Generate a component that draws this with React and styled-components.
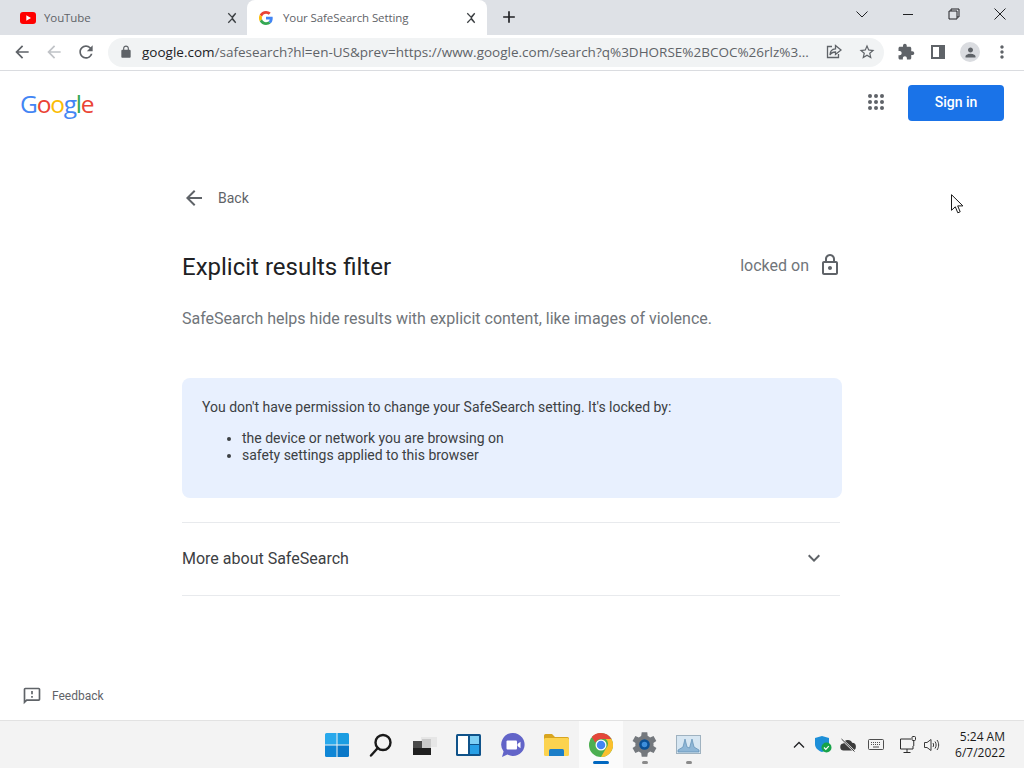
import React from 'react';
import styled, { createGlobalStyle } from 'styled-components';

const GlobalStyle = createGlobalStyle`
  html, body {
    margin: 0;
    padding: 0;
    height: 100%;
    overflow: hidden;
    background: #fff;
    font-family: 'Roboto', 'Liberation Sans', sans-serif;
  }
  #root {
    height: 100%;
  }
`;

const Window = styled.div`
  position: relative;
  display: flex;
  flex-direction: column;
  width: 1024px;
  height: 768px;
  overflow: hidden;
`;

/* ---- browser chrome ---- */

const TabStrip = styled.div`
  display: flex;
  align-items: stretch;
  height: 35px;
  flex: none;
  background: #dee1e6;
  font-family: 'Open Sans', 'Liberation Sans', sans-serif;
`;

const Tab = styled.div`
  display: flex;
  align-items: center;
  box-sizing: border-box;
  width: ${p => (p.$active ? '240px' : '247px')};
  padding: ${p => (p.$active ? '0 8px 0 12px' : '0 7px 0 20px')};
  background: ${p => (p.$active ? '#fff' : 'transparent')};
  border-radius: 8px 8px 0 0;
`;

const TabIcon = styled.span`
  display: flex;
  flex: none;
  margin-right: ${p => p.$gap}px;
`;

const TabTitle = styled.span`
  flex: 1;
  font-size: 11.5px;
  letter-spacing: -0.1px;
  color: #5f6368;
  white-space: nowrap;
`;

const NewTab = styled.div`
  display: flex;
  align-items: center;
  margin: 0 0 2px 12px;
  flex: 1;
`;

const WindowControls = styled.div`
  display: flex;
  align-items: center;
  height: 28px;
  margin-left: auto;
  gap: 34px;
  padding-right: 18px;
`;

const Toolbar = styled.div`
  display: flex;
  align-items: center;
  box-sizing: border-box;
  height: 36px;
  flex: none;
  padding: 0 6px 1px 12px;
  background: #fff;
  border-bottom: 1px solid #dadce0;
`;

const NavButtons = styled.div`
  display: flex;
  align-items: center;
  gap: 12px;
`;

const Omnibox = styled.div`
  display: flex;
  align-items: center;
  box-sizing: border-box;
  width: 776px;
  height: 29px;
  margin-left: 12px;
  padding: 0 8px 0 11px;
  border-radius: 15px;
  background: #f1f3f4;
`;

const Url = styled.div`
  flex: 1;
  margin-left: 9px;
  font-family: 'Open Sans', 'Liberation Sans', sans-serif;
  font-size: 13.5px;
  color: #5f6368;
  white-space: nowrap;
`;

const UrlHost = styled.span`
  color: #202124;
`;

const OmniActions = styled.div`
  display: flex;
  align-items: center;
  gap: 16px;
  margin-left: 8px;
`;

const ToolActions = styled.div`
  display: grid;
  grid-template-columns: repeat(4, 32px);
  justify-items: center;
  align-items: center;
  margin-left: 6px;
`;

const Avatar = styled.div`
  display: flex;
  align-items: center;
  justify-content: center;
  width: 20px;
  height: 20px;
  border-radius: 50%;
  background: #dadce0;
`;

/* ---- page ---- */

const Page = styled.main`
  flex: 1;
  display: flex;
  flex-direction: column;
  min-height: 0;
  background: #fff;
`;

const Header = styled.header`
  display: flex;
  align-items: center;
  height: 62px;
  padding: 0 20px;
`;

const Logo = styled.div`
  font-family: 'Open Sans', 'Liberation Sans', sans-serif;
  font-size: 24.5px;
  letter-spacing: -1.2px;
  line-height: 30px;
  margin-top: 4px;
`;

const LogoLetter = styled.span`
  color: ${p => p.$color};
`;

const AppsGrid = styled.div`
  display: grid;
  grid-template-columns: repeat(3, 4px);
  grid-auto-rows: 4px;
  gap: 2px;
  margin-left: auto;
  margin-right: 24px;
`;

const AppsDot = styled.span`
  border-radius: 50%;
  background: #5f6368;
`;

const SignIn = styled.button`
  width: 96px;
  height: 36px;
  margin-top: 2px;
  padding: 0 0 2px;
  border: none;
  border-radius: 4px;
  background: #1a73e8;
  color: #fff;
  font-family: 'Roboto', sans-serif;
  font-size: 14px;
  font-weight: 500;
`;

const Content = styled.section`
  display: flex;
  flex-direction: column;
  width: 658px;
  margin: 0 0 0 182px;
`;

const BackLink = styled.div`
  display: flex;
  align-items: center;
  height: 24px;
  margin-top: 53px;
  gap: 12px;
  font-size: 14px;
  color: #5f6368;
`;

const TitleRow = styled.div`
  display: flex;
  align-items: center;
  justify-content: space-between;
  width: 660px;
  margin-top: 37px;
  height: 40px;
`;

const Title = styled.h1`
  margin: 0;
  font-size: 24px;
  font-weight: 400;
  color: #202124;
`;

const LockStatus = styled.div`
  display: flex;
  align-items: center;
  gap: 9px;
  margin-bottom: 4px;
  font-size: 16px;
  color: #70757a;
`;

const Description = styled.p`
  margin: 21px 0 0;
  font-size: 16px;
  line-height: 22px;
  color: #70757a;
`;

const Notice = styled.div`
  box-sizing: border-box;
  width: 660px;
  height: 120px;
  margin-top: 48px;
  padding: 20px;
  border-radius: 8px;
  background: #e8f0fe;
  font-size: 14px;
  color: #3c4043;
`;

const NoticeText = styled.div`
  line-height: 18px;
`;

const NoticeList = styled.ul`
  margin: 14px 0 0;
  padding-left: 40px;
  line-height: 17px;
`;

const Disclosure = styled.div`
  display: flex;
  align-items: center;
  justify-content: space-between;
  box-sizing: border-box;
  height: 74px;
  margin-top: 24px;
  padding: 0 14px 2px 0;
  border-top: 1px solid #e8eaed;
  border-bottom: 1px solid #e8eaed;
  font-size: 16px;
  color: #3c4043;
`;

const Feedback = styled.div`
  display: flex;
  align-items: center;
  gap: 10px;
  margin-top: auto;
  margin-bottom: 14px;
  padding-left: 22px;
  font-size: 12px;
  color: #5f6368;
`;

/* ---- taskbar ---- */

const Taskbar = styled.footer`
  display: grid;
  grid-template-columns: 1fr 396px 1fr;
  align-items: center;
  box-sizing: border-box;
  height: 48px;
  flex: none;
  padding-left: 1px;
  background: #f3f3f3;
  border-top: 1px solid #e2e2e2;
`;

const TaskIcons = styled.div`
  grid-column: 2;
  display: grid;
  grid-template-columns: repeat(9, 44px);
  height: 100%;
`;

const TaskIcon = styled.div`
  position: relative;
  display: flex;
  align-items: center;
  justify-content: center;
  background: ${p => (p.$active ? '#fbfbfb' : 'transparent')};
`;

const RunMark = styled.span`
  position: absolute;
  bottom: 4px;
  left: 50%;
  width: ${p => (p.$active ? 16 : 6)}px;
  height: 3px;
  margin-left: ${p => (p.$active ? -8 : -3)}px;
  border-radius: 2px;
  background: ${p => (p.$active ? '#0067c0' : '#8a8a8a')};
`;

const Tray = styled.div`
  display: flex;
  align-items: center;
  justify-content: flex-end;
  padding-right: 19px;
`;

const TrayIcon = styled.span`
  display: flex;
  margin-right: ${p => p.$gap || 0}px;
`;

const Clock = styled.div`
  margin-left: 14px;
  text-align: right;
  font-family: 'Open Sans', 'Liberation Sans', sans-serif;
  font-size: 12px;
  line-height: 16px;
  color: #1a1a1a;
`;

const Cursor = styled.svg`
  position: absolute;
  left: 951px;
  top: 194px;
`;

/* ---- icons ---- */

const GLYPHS = {
  back: 'M20 11H7.83l5.59-5.59L12 4l-8 8 8 8 1.41-1.41L7.83 13H20v-2z',
  reload: 'M17.65 6.35A7.958 7.958 0 0012 4c-4.42 0-7.99 3.58-7.99 8s3.57 8 7.99 8c3.73 0 6.84-2.55 7.73-6h-2.08A5.99 5.99 0 0112 18c-3.31 0-6-2.69-6-6s2.69-6 6-6c1.66 0 3.14.69 4.22 1.78L13 11h7V4l-2.35 2.35z',
  lock: 'M18 8h-1V6c0-2.76-2.24-5-5-5S7 3.24 7 6v2H6c-1.1 0-2 .9-2 2v10c0 1.1.9 2 2 2h12c1.1 0 2-.9 2-2V10c0-1.1-.9-2-2-2zM9 6c0-1.66 1.34-3 3-3s3 1.34 3 3v2H9V6z',
  lockOutline: 'M18 8h-1V6c0-2.76-2.24-5-5-5S7 3.24 7 6v2H6c-1.1 0-2 .9-2 2v10c0 1.1.9 2 2 2h12c1.1 0 2-.9 2-2V10c0-1.1-.9-2-2-2zM9 6c0-1.66 1.34-3 3-3s3 1.34 3 3v2H9V6zm9 14H6V10h12v10zm-6-3c1.1 0 2-.9 2-2s-.9-2-2-2-2 .9-2 2 .9 2 2 2z',
  star: 'M22 9.24l-7.19-.62L12 2 9.19 8.63 2 9.24l5.46 4.73L5.82 21 12 17.27 18.18 21l-1.63-7.03L22 9.24zM12 15.4l-3.76 2.27 1-4.28-3.32-2.88 4.38-.38L12 6.1l1.71 4.03 4.38.38-3.32 2.88 1 4.28L12 15.4z',
  extension: 'M20.5 11H19V7c0-1.1-.9-2-2-2h-4V3.5C13 2.12 11.88 1 10.5 1S8 2.12 8 3.5V5H4c-1.1 0-1.99.9-1.99 2v3.8H3.5c1.49 0 2.7 1.21 2.7 2.7s-1.21 2.7-2.7 2.7H2V20c0 1.1.9 2 2 2h3.8v-1.5c0-1.49 1.21-2.7 2.7-2.7 1.49 0 2.7 1.21 2.7 2.7V22H17c1.1 0 2-.9 2-2v-4h1.5c1.38 0 2.5-1.12 2.5-2.5S21.88 11 20.5 11z',
  person: 'M12 12c2.21 0 4-1.79 4-4s-1.79-4-4-4-4 1.79-4 4 1.79 4 4 4zm0 2c-2.67 0-8 1.34-8 4v2h16v-2c0-2.66-5.33-4-8-4z',
  dots: 'M12 8c1.1 0 2-.9 2-2s-.9-2-2-2-2 .9-2 2 .9 2 2 2zm0 2c-1.1 0-2 .9-2 2s.9 2 2 2 2-.9 2-2-.9-2-2-2zm0 6c-1.1 0-2 .9-2 2s.9 2 2 2 2-.9 2-2-.9-2-2-2z',
  feedback: 'M20 2H4c-1.1 0-1.99.9-1.99 2L2 22l4-4h14c1.1 0 2-.9 2-2V4c0-1.1-.9-2-2-2zm0 14H5.17L4 17.17V4h16v12zM11 12h2v2h-2zm0-6h2v4h-2z',
  chevron: 'M16.59 8.59L12 13.17 7.41 8.59 6 10l6 6 6-6z',
  close: 'M18.3 5.71L16.89 4.3 12 9.19 7.11 4.3 5.7 5.71 10.59 10.6 12 12l-6.3 6.29 1.41 1.41L12 14.81l4.89 4.89 1.41-1.41L13.41 12z',
  plus: 'M19 13h-6v6h-2v-6H5v-2h6V5h2v6h6v2z',
};

const Icon = ({ name, size = 24, color = '#5f6368' }) => (
  <svg width={size} height={size} viewBox="0 0 24 24" fill={color}>
    <path d={GLYPHS[name]} />
  </svg>
);

const GoogleG = () => (
  <svg width="14" height="14" viewBox="0 0 48 48">
    <path fill="#EA4335" d="M24 9.5c3.54 0 6.71 1.22 9.21 3.6l6.85-6.85C35.9 2.38 30.47 0 24 0 14.62 0 6.51 5.38 2.56 13.22l7.98 6.19C12.43 13.72 17.74 9.5 24 9.5z" />
    <path fill="#4285F4" d="M46.98 24.55c0-1.57-.15-3.09-.38-4.55H24v9.02h12.94c-.58 2.96-2.26 5.48-4.78 7.18l7.73 6c4.51-4.18 7.09-10.36 7.09-17.65z" />
    <path fill="#FBBC05" d="M10.53 28.59c-.48-1.45-.76-2.99-.76-4.59s.27-3.14.76-4.59l-7.98-6.19C.92 16.46 0 20.12 0 24c0 3.88.92 7.54 2.56 10.78l7.97-6.19z" />
    <path fill="#34A853" d="M24 48c6.48 0 11.93-2.13 15.89-5.81l-7.73-6c-2.15 1.45-4.92 2.3-8.16 2.3-6.26 0-11.57-4.22-13.47-9.91l-7.98 6.19C6.51 42.62 14.62 48 24 48z" />
  </svg>
);

const YouTubeIcon = () => (
  <svg width="16" height="12" viewBox="0 0 16 12">
    <rect width="16" height="12" rx="3" fill="#f00" />
    <path d="M6.3 3.2v5.6L11 6z" fill="#fff" />
  </svg>
);

const ShareIcon = () => (
  <svg width="16" height="16" viewBox="0 0 16 16" fill="none" stroke="#5f6368" strokeWidth="1.3">
    <path d="M6 2.5H1.5v11h11V10" />
    <path d="M9.5 1.500 15 6l-5.500 4.500V8C7 8 5 9 4 11c0-3.500 2-6 5.500-6.200z" />
  </svg>
);

const SidePanelIcon = () => (
  <svg width="14" height="14" viewBox="0 0 14 14">
    <path d="M0 0h14v14H0z" fill="#5f6368" />
    <path d="M2 2h6v10H2z" fill="#fff" />
  </svg>
);

const WinLine = ({ d, width = 1 }) => (
  <svg width="12" height="12" viewBox="0 0 12 12" fill="none" stroke="#202124" strokeWidth={width}>
    <path d={d} />
  </svg>
);

const WindowsLogo = () => (
  <svg width="24" height="24" viewBox="0 0 24 24">
    <path d="M0 1.500A1.500 1.500 0 0 1 1.500 0H11.500V11.500H0z" fill="#29a9ec" />
    <path d="M12.500 0H22.500A1.500 1.500 0 0 1 24 1.500V11.500H12.500z" fill="#1b9de2" />
    <path d="M0 12.500H11.500V24H1.500A1.500 1.500 0 0 1 0 22.500z" fill="#0f86d6" />
    <path d="M12.500 12.500H24V22.500A1.500 1.500 0 0 1 22.500 24H12.500z" fill="#0a78c8" />
  </svg>
);

const SearchIcon = () => (
  <svg width="24" height="24" viewBox="0 0 24 24" fill="none" stroke="#1a1a1a" strokeWidth="2.4">
    <circle cx="14" cy="9.500" r="7.500" />
    <path d="M8.800 15 2 22.500" strokeLinecap="round" />
  </svg>
);

const TaskViewIcon = () => (
  <svg width="24" height="20" viewBox="0 0 24 20">
    <path d="M8 2h16v10H8z" fill="#e6e6e6" />
    <path d="M0 6h18v14H0z" fill="#1f1f1f" />
    <path d="M0 6h18v7H0z" fill="#4a4a4a" />
    <path d="M9 4h9v9H9z" fill="#c9c9c9" />
  </svg>
);

const WidgetsIcon = () => (
  <svg width="25" height="22" viewBox="0 0 25 22">
    <rect width="25" height="22" rx="1.500" fill="#10538a" />
    <path d="M2 2h10v18H2z" fill="#fff" />
    <path d="M14 2h9v8H14z" fill="#7fd0f5" />
    <path d="M14 11h9v9H14z" fill="#28a0e6" />
  </svg>
);

const ChatIcon = () => (
  <svg width="24" height="24" viewBox="0 0 24 24">
    <path d="M12 0a11.500 11.500 0 1 1-5.600 21.500L1 24l1.600-5.600A11.500 11.500 0 0 1 12 0z" fill="#6264c8" />
    <path d="M6.500 7.500h8.500a1 1 0 0 1 1 1v7a1 1 0 0 1-1 1H6.500a1 1 0 0 1-1-1v-7a1 1 0 0 1 1-1z" fill="#fff" />
    <path d="m16.500 11 3-2.200v6.400l-3-2.200z" fill="#fff" />
  </svg>
);

const ExplorerIcon = () => (
  <svg width="25" height="22" viewBox="0 0 25 22">
    <path d="M0 1.500A1.500 1.500 0 0 1 1.500 0H8l3 3h12.500A1.500 1.500 0 0 1 25 4.500V8H0z" fill="#d8a520" />
    <rect y="4" width="25" height="18" rx="1.500" fill="#fcd34f" />
    <path d="M5 16.500A1.500 1.500 0 0 1 6.500 15h12a1.500 1.500 0 0 1 1.500 1.500V22H5z" fill="#1b7ec8" />
  </svg>
);

const ChromeIcon = () => (
  <svg width="24" height="24" viewBox="0 0 48 48">
    <circle cx="24" cy="24" r="24" fill="#4caf50" />
    <path d="M24 0a24 24 0 0 1 20.800 12H24a12 12 0 0 0-11.100 7.500L5.500 8.200A24 24 0 0 1 24 0z" fill="#e4473a" />
    <path d="M44.800 12A24 24 0 0 1 24 48l10.400-18A12 12 0 0 0 33.500 12z" fill="#fbc02d" />
    <circle cx="24" cy="24" r="11" fill="#fff" />
    <circle cx="24" cy="24" r="8.500" fill="#4285f4" />
  </svg>
);

const SettingsIcon = () => (
  <svg width="25" height="25" viewBox="3 3 18 18">
    <path d="M19.400 13c.1-.3.1-.7.1-1s0-.7-.1-1l2.100-1.600-2-3.500-2.500 1a7.500 7.500 0 0 0-1.700-1L15 3.200h-4l-.4 2.700c-.6.300-1.200.6-1.700 1l-2.500-1-2 3.500L6.500 11c0 .3-.1.700-.1 1s0 .7.100 1l-2.100 1.600 2 3.500 2.500-1c.5.400 1.100.7 1.700 1l.4 2.700h4l.4-2.700c.6-.3 1.200-.6 1.700-1l2.500 1 2-3.500z" transform="translate(-1 0)" fill="#74787d" />
    <circle cx="12" cy="12" r="3.800" fill="#0b4f94" />
    <circle cx="12" cy="12" r="2" fill="#3f8fdc" />
  </svg>
);

const MonitorIcon = () => (
  <svg width="25" height="19" viewBox="0 0 25 19">
    <rect x=".5" y=".5" width="24" height="18" fill="#d6e6f2" stroke="#9fb2c0" />
    <path d="M2 15 7 12 9 4l2 8 2.500 1L16 4l2 8 5 3v2H2z" fill="#8eb6d6" stroke="#5f8eb3" strokeWidth=".7" />
  </svg>
);

const ShieldIcon = () => (
  <svg width="17" height="17" viewBox="0 0 17 17">
    <path d="M7 0 14 2v6c0 4-3 6.500-7 8-4-1.500-7-4-7-8V2z" fill="#1d8fd8" />
    <circle cx="11.500" cy="11.500" r="5" fill="#18a34a" />
    <path d="m9 11.500 1.800 1.800 3-3.200" fill="none" stroke="#fff" strokeWidth="1.200" />
  </svg>
);

const CloudOffIcon = () => (
  <svg width="16" height="14" viewBox="0 0 16 14">
    <path d="M4 12.500a3.500 3.500 0 0 1-.5-7 4.500 4.500 0 0 1 8.600-.7A3.800 3.800 0 0 1 12 12.500z" fill="#3b3b3b" />
    <path d="M2 1.500 14 13" stroke="#f3f3f3" strokeWidth="2" />
    <path d="M1.500 1 14.500 13.500" stroke="#3b3b3b" strokeWidth="1" />
  </svg>
);

const KeyboardIcon = () => (
  <svg width="16" height="11" viewBox="0 0 16 11" fill="none" stroke="#3b3b3b" strokeWidth=".9">
    <rect x=".5" y=".5" width="15" height="10" rx="1" />
    <path d="M3 3.500h10M3 5.500h10" strokeDasharray="1 1" />
    <path d="M5 8h6" />
  </svg>
);

const NetworkIcon = () => (
  <svg width="17" height="17" viewBox="0 0 17 17" fill="none" stroke="#2b2b2b" strokeWidth="1">
    <path d="M11 3H.5v10H13V10" />
    <path d="M7 13v3M3.500 16.500h7" />
    <rect x="12" y=".5" width="3.500" height="4" rx="1" />
    <path d="M13.750 4.500V10" />
  </svg>
);

const VolumeIcon = () => (
  <svg width="17" height="14" viewBox="0 0 17 14" fill="none" stroke="#3b3b3b" strokeWidth="1">
    <path d="M.5 4.500h2.500L7 1.500v11L3 9.500H.5z" />
    <path d="M9 5c.8 1.200.8 2.800 0 4M11 3.500c1.500 2 1.500 5 0 7M13 2c2.200 3 2.200 7 0 10" />
  </svg>
);

const TASK_ITEMS = [
  { id: 'start', icon: <WindowsLogo /> },
  { id: 'search', icon: <SearchIcon /> },
  { id: 'view', icon: <TaskViewIcon /> },
  { id: 'widgets', icon: <WidgetsIcon /> },
  { id: 'chat', icon: <ChatIcon /> },
  { id: 'explorer', icon: <ExplorerIcon /> },
  { id: 'chrome', icon: <ChromeIcon />, running: true, active: true },
  { id: 'settings', icon: <SettingsIcon />, running: true },
  { id: 'monitor', icon: <MonitorIcon />, running: true },
];

const LOGO_LETTERS = [
  ['G', '#4285f4'],
  ['o', '#ea4335'],
  ['o', '#fbbc05'],
  ['g', '#4285f4'],
  ['l', '#34a853'],
  ['e', '#ea4335'],
];

export default function App() {
  return (
    <Window>
      <GlobalStyle />

      <TabStrip>
        <Tab>
          <TabIcon $gap={8}><YouTubeIcon /></TabIcon>
          <TabTitle>YouTube</TabTitle>
          <Icon name="close" size={16} color="#3c4043" />
        </Tab>
        <Tab $active>
          <TabIcon $gap={10}><GoogleG /></TabIcon>
          <TabTitle>Your SafeSearch Setting</TabTitle>
          <Icon name="close" size={16} color="#3c4043" />
        </Tab>
        <NewTab>
          <Icon name="plus" size={20} color="#202124" />
        </NewTab>
        <WindowControls>
          <WinLine d="M.5 3.500 6 9l5.500-5.500" />
          <WinLine d="M1 6.500h10" />
          <WinLine d="M1 3h8v8H1zM3 3V1h8v8H9" />
          <WinLine d="M.5.5l11 11M11.500.5l-11 11" />
        </WindowControls>
      </TabStrip>

      <Toolbar>
        <NavButtons>
          <Icon name="back" size={20} color="#5f6368" />
          <Icon name="back" size={20} color="#c0c3c7" />
          <Icon name="reload" size={20} color="#5f6368" />
        </NavButtons>
        <Omnibox>
          <Icon name="lock" size={14} color="#5f6368" />
          <Url>
            <UrlHost>google.com</UrlHost>/safesearch?hl=en-US&amp;prev=https://www.google.com/search?q%3DHORSE%2BCOC%26rlz%3...
          </Url>
          <OmniActions>
            <ShareIcon />
            <Icon name="star" size={18} color="#5f6368" />
          </OmniActions>
        </Omnibox>
        <ToolActions>
          <Icon name="extension" size={18} color="#5f6368" />
          <SidePanelIcon />
          <Avatar><Icon name="person" size={15} color="#5f6368" /></Avatar>
          <Icon name="dots" size={20} color="#5f6368" />
        </ToolActions>
      </Toolbar>

      <Page>
        <Header>
          <Logo>
            {LOGO_LETTERS.map(([letter, color], i) => (
              <LogoLetter key={i} $color={color}>{letter}</LogoLetter>
            ))}
          </Logo>
          <AppsGrid>
            {Array.from({ length: 9 }, (_, i) => <AppsDot key={i} />)}
          </AppsGrid>
          <SignIn>Sign in</SignIn>
        </Header>

        <Content>
          <BackLink>
            <Icon name="back" size={24} color="#5f6368" />
            Back
          </BackLink>
          <TitleRow>
            <Title>Explicit results filter</Title>
            <LockStatus>
              locked on
              <Icon name="lockOutline" size={24} color="#5f6368" />
            </LockStatus>
          </TitleRow>
          <Description>SafeSearch helps hide results with explicit content, like images of violence.</Description>
          <Notice>
            <NoticeText>You don't have permission to change your SafeSearch setting. It's locked by:</NoticeText>
            <NoticeList>
              <li>the device or network you are browsing on</li>
              <li>safety settings applied to this browser</li>
            </NoticeList>
          </Notice>
          <Disclosure>
            More about SafeSearch
            <Icon name="chevron" size={24} color="#5f6368" />
          </Disclosure>
        </Content>

        <Feedback>
          <Icon name="feedback" size={20} color="#5f6368" />
          Feedback
        </Feedback>
      </Page>

      <Taskbar>
        <TaskIcons>
          {TASK_ITEMS.map(item => (
            <TaskIcon key={item.id} $active={item.active}>
              {item.icon}
              {item.running && <RunMark $active={item.active} />}
            </TaskIcon>
          ))}
        </TaskIcons>
        <Tray>
          <TrayIcon $gap={10}>
            <WinLine d="M1 8.500 6 3.500l5 5" width={1.300} />
          </TrayIcon>
          <TrayIcon $gap={8}><ShieldIcon /></TrayIcon>
          <TrayIcon $gap={12}><CloudOffIcon /></TrayIcon>
          <TrayIcon $gap={16}><KeyboardIcon /></TrayIcon>
          <TrayIcon $gap={7}><NetworkIcon /></TrayIcon>
          <TrayIcon><VolumeIcon /></TrayIcon>
          <Clock>
            <div>5:24 AM</div>
            <div>6/7/2022</div>
          </Clock>
        </Tray>
      </Taskbar>

      <Cursor width="13" height="20" viewBox="0 0 13 20">
        <path d="M.5.7v15.600l3.800-3.500 2.500 6 2.400-1-2.500-5.900h5.200z" fill="#fff" stroke="#1a1a1a" strokeWidth="1" />
      </Cursor>
    </Window>
  );
}
